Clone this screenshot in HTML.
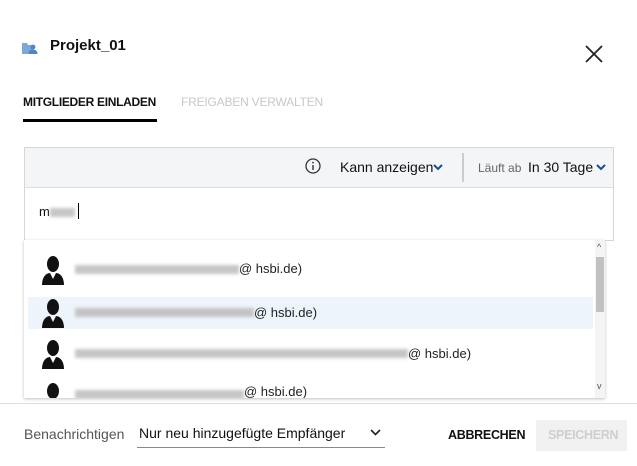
<!DOCTYPE html>
<html><head><style>
body{margin:0;width:637px;height:466px;background:#fff;font-family:"Liberation Sans",sans-serif;position:relative;overflow:hidden;color:#111}
.a{position:absolute}
.blur{position:absolute;height:9px;background:#b8b8b8;filter:blur(1.5px);opacity:.8}
.row{position:absolute;left:28px;width:565px;height:32px}
.row .t{position:absolute;top:8px;font-size:13px;color:#222}
</style></head><body>
<svg class="a" style="left:22px;top:43px" width="17" height="11" viewBox="0 0 17 11"><path d="M0 0h5l1 2h5v9H0z" fill="#7ba7d9"/><circle cx="11" cy="4" r="2.4" fill="#4f86c6"/><path d="M6.5 11c0-3 2-4.5 4.5-4.5s4.5 1.5 4.5 4.5z" fill="#4f86c6"/></svg>
<div class="a" style="left:50px;top:37px;font-size:15px;font-weight:bold">Projekt_01</div>
<svg class="a" style="left:585px;top:45px" width="18" height="18"><path d="M1 1L17 17M17 1L1 17" stroke="#222" stroke-width="1.8"/></svg>
<div class="a" style="left:23px;top:95px;font-size:12px;font-weight:bold;letter-spacing:-0.3px">MITGLIEDER EINLADEN</div>
<div class="a" style="left:181px;top:95px;font-size:12px;color:#c8c8c8;letter-spacing:-0.2px">FREIGABEN VERWALTEN</div>
<div class="a" style="left:23px;top:119px;width:134px;height:3px;background:#000"></div>
<div class="a" style="left:24px;top:147px;width:590px;height:94px;border:1px solid #d6d6d6;box-sizing:border-box"></div>
<div class="a" style="left:25px;top:148px;width:588px;height:39px;background:#f4f5f7;border-bottom:1px solid #ddd"></div>
<svg class="a" style="left:305px;top:158px" width="16" height="16"><circle cx="8" cy="8" r="7" fill="none" stroke="#333" stroke-width="1.3"/><rect x="7.3" y="7" width="1.4" height="5" fill="#333"/><circle cx="8" cy="4.6" r="0.9" fill="#333"/></svg>
<div class="a" style="left:340px;top:159px;font-size:14px">Kann anzeigen</div>
<svg class="a" style="left:433px;top:164px" width="10" height="7"><path d="M1 1l4 4 4-4" stroke="#1b4d8f" stroke-width="2" fill="none"/></svg>
<div class="a" style="left:462px;top:153px;width:2px;height:29px;background:#ccc"></div>
<div class="a" style="left:478px;top:161px;font-size:12px;color:#666">Läuft ab</div>
<div class="a" style="left:528px;top:159px;font-size:14px">In 30 Tage</div>
<svg class="a" style="left:596px;top:164px" width="10" height="7"><path d="M1 1l4 4 4-4" stroke="#1b4d8f" stroke-width="2" fill="none"/></svg>
<div class="a" style="left:39px;top:204px;font-size:13px">m</div>
<div class="blur" style="left:50px;top:208px;width:25px"></div>
<div class="a" style="left:78px;top:203px;width:1px;height:16px;background:#000"></div>
<div class="a" style="left:24px;top:240px;width:581px;height:158px;background:#fff;box-shadow:0 1px 3px rgba(0,0,0,.25)"></div>
<div class="a" style="left:595px;top:240px;width:10px;height:158px;background:#f4f4f4"></div>
<div class="a" style="left:596px;top:257px;width:8px;height:55px;background:#c1c1c1"></div>
<div class="a" style="left:597px;top:242px;font-size:9px;color:#555">^</div>
<div class="a" style="left:597px;top:381px;font-size:9px;color:#555">v</div>
<div class="row" style="top:253px"><svg class="a" style="left:14px;top:2px" width="22" height="30" viewBox="0 0 22 30"><ellipse cx="11" cy="9" rx="6" ry="8" fill="#111"/><path d="M0 30c0-8 4-12 8-12l3 6 3-6c4 0 8 4 8 12z" fill="#111"/></svg><div class="blur" style="left:47px;top:12px;width:164px"></div><div class="t" style="left:211px">@ hsbi.de)</div></div>
<div class="row" style="top:297px;background:#eef4fc"><svg class="a" style="left:14px;top:1px" width="22" height="30" viewBox="0 0 22 30"><ellipse cx="11" cy="9" rx="6" ry="8" fill="#111"/><path d="M0 30c0-8 4-12 8-12l3 6 3-6c4 0 8 4 8 12z" fill="#111"/></svg><div class="blur" style="left:47px;top:11px;width:179px"></div><div class="t" style="left:226px">@ hsbi.de)</div></div>
<div class="row" style="top:338px"><svg class="a" style="left:14px;top:1px" width="22" height="30" viewBox="0 0 22 30"><ellipse cx="11" cy="9" rx="6" ry="8" fill="#111"/><path d="M0 30c0-8 4-12 8-12l3 6 3-6c4 0 8 4 8 12z" fill="#111"/></svg><div class="blur" style="left:47px;top:11px;width:333px"></div><div class="t" style="left:380px">@ hsbi.de)</div></div>
<div class="row" style="top:380px;height:18px;overflow:hidden"><svg class="a" style="left:14px;top:2px" width="22" height="30" viewBox="0 0 22 30"><ellipse cx="11" cy="9" rx="6" ry="8" fill="#111"/><path d="M0 30c0-8 4-12 8-12l3 6 3-6c4 0 8 4 8 12z" fill="#111"/></svg><div class="blur" style="left:47px;top:10px;width:169px"></div><div class="t" style="left:216px;top:4px">@ hsbi.de)</div></div>
<div class="a" style="left:0;top:403px;width:637px;height:1px;background:#ddd"></div>
<div class="a" style="left:24px;top:426px;font-size:14px;color:#555">Benachrichtigen</div>
<div class="a" style="left:139px;top:425px;font-size:14px">Nur neu hinzugefügte Empfänger</div>
<svg class="a" style="left:370px;top:429px" width="11" height="8"><path d="M1 1l4.5 4.5L10 1" stroke="#222" stroke-width="1.6" fill="none"/></svg>
<div class="a" style="left:137px;top:447px;width:248px;height:1px;background:#888"></div>
<div class="a" style="left:448px;top:428px;font-size:12.5px;font-weight:bold;letter-spacing:-0.3px">ABBRECHEN</div>
<div class="a" style="left:536px;top:420px;width:91px;height:31px;background:#f1f1f1"></div>
<div class="a" style="left:548px;top:428px;font-size:12.5px;font-weight:bold;color:#cfcfcf;letter-spacing:-0.3px">SPEICHERN</div>
</body></html>
